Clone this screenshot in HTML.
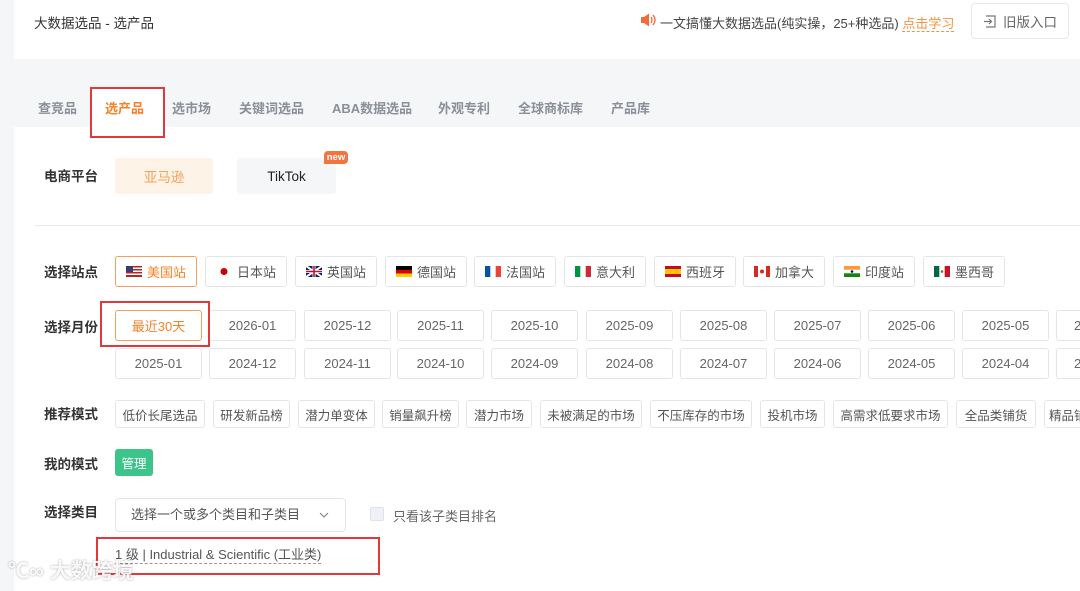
<!DOCTYPE html>
<html><head><meta charset="utf-8"><style>
*{margin:0;padding:0;box-sizing:border-box}
body{width:1080px;height:591px;overflow:hidden;background:#f5f6f8;font-family:"Liberation Sans","Noto Sans CJK SC",sans-serif;position:relative;color:#333}
.a{position:absolute}
.hdr{left:14px;top:0;width:1066px;height:59px;background:#fff}
.main{left:14px;top:127px;width:1066px;height:464px;background:#fff}
.tab{top:98px;font-size:13px;color:#8a8f99;font-weight:bold}
.lbl{font-size:13.5px;font-weight:bold;color:#333}
.b{position:absolute;border:1px solid #e3e5e9;border-radius:3px;background:#fff;font-size:13px;color:#555;display:flex;align-items:center;justify-content:center;white-space:nowrap;overflow:hidden}
.b svg{margin-right:5px}
.m{top:310px;width:87px;height:31px;font-size:13px;color:#666}
.m2{top:348px}
.r{top:400px;height:28px;font-size:12.5px;justify-content:center;padding:0 4px}
.red{position:absolute;border:2px solid #e0393b}
</style></head><body>
<div class="a hdr"></div>
<div class="a" style="left:34px;top:12px;font-size:13.5px;color:#333">大数据选品 - 选产品</div>
<svg class="a" style="left:640px;top:13px" width="18" height="14" viewBox="0 0 18 14"><path d="M1 4h3l5-3.5v13L4 10H1z" fill="#f26b3a"/><path d="M11 4q2 3 0 6M13 2q4 5 0 10" stroke="#f26b3a" stroke-width="1.3" fill="none"/></svg>
<div class="a" style="left:660px;top:13px;font-size:13px;color:#444">一文搞懂大数据选品(纯实操，25+种选品) <span style="color:#f29340;border-bottom:1px dashed #f29340">点击学习</span></div>
<div class="a" style="left:971px;top:3px;width:98px;height:36px;border:1px solid #e6e8eb;border-radius:4px;background:#fff;font-size:13.5px;color:#666;display:flex;align-items:center;justify-content:center"><svg width="14" height="13" viewBox="0 0 14 13" style="margin-right:6px"><path d="M3 1h9v11H3M1 6.5h7M6 4l2.5 2.5L6 9" stroke="#777" stroke-width="1.2" fill="none"/></svg>旧版入口</div>
<div class="a main"></div>
<div class="a" style="left:92px;top:88px;width:72px;height:39px;background:#fff"></div>
<div class="a tab" style="left:38px">查竞品</div>
<div class="a tab" style="left:105px;color:#f5822a">选产品</div>
<div class="a tab" style="left:172px">选市场</div>
<div class="a tab" style="left:239px">关键词选品</div>
<div class="a tab" style="left:332px">ABA数据选品</div>
<div class="a tab" style="left:438px">外观专利</div>
<div class="a tab" style="left:518px">全球商标库</div>
<div class="a tab" style="left:611px">产品库</div>
<div class="red" style="left:90px;top:87px;width:75px;height:51px"></div>

<div class="a lbl" style="left:44px;top:165px">电商平台</div>
<div class="a" style="left:115px;top:158px;width:98px;height:36px;background:#fef3e7;border-radius:3px;color:#f5a05a;font-size:13.5px;display:flex;align-items:center;justify-content:center">亚马逊</div>
<div class="a" style="left:237px;top:158px;width:99px;height:36px;background:#f5f6f8;border-radius:3px;color:#222;font-size:13.5px;display:flex;align-items:center;justify-content:center">TikTok</div>
<div class="a" style="left:324px;top:151px;width:24px;height:13px;background:#f2743e;border-radius:4px 4px 4px 0;color:#fff;font-size:9.5px;line-height:13px;text-align:center;font-weight:bold">new</div>
<div class="a" style="left:35px;top:225px;width:1045px;height:1px;background:#e8e9ec"></div>

<div class="a lbl" style="left:44px;top:261px">选择站点</div>
<div class="b" style="left:115px;top:256px;width:82px;height:31px;border-color:#f5a05a;color:#f5822a"><svg width="16" height="11"><rect width="16" height="11" fill="#b22"/><rect y="1.5" width="16" height="1.5" fill="#fff"/><rect y="4.5" width="16" height="1.5" fill="#fff"/><rect y="7.5" width="16" height="1.5" fill="#fff"/><rect width="7" height="6" fill="#3c3b6e"/></svg>美国站</div>
<div class="b" style="left:205px;top:256px;width:82px;height:31px"><svg width="16" height="11"><circle cx="8" cy="5.5" r="3.5" fill="#c00"/></svg>日本站</div>
<div class="b" style="left:295px;top:256px;width:82px;height:31px"><svg width="16" height="11"><rect width="16" height="11" fill="#012169"/><path d="M0 0L16 11M16 0L0 11" stroke="#fff" stroke-width="2"/><path d="M8 0v11M0 5.5h16" stroke="#fff" stroke-width="3"/><path d="M8 0v11M0 5.5h16" stroke="#c8102e" stroke-width="1.6"/></svg>英国站</div>
<div class="b" style="left:385px;top:256px;width:82px;height:31px"><svg width="16" height="11"><rect width="16" height="4" fill="#000"/><rect y="4" width="16" height="3.5" fill="#d00"/><rect y="7.5" width="16" height="3.5" fill="#fc0"/></svg>德国站</div>
<div class="b" style="left:474px;top:256px;width:82px;height:31px"><svg width="16" height="11"><rect width="5.3" height="11" fill="#0055a4"/><rect x="10.7" width="5.3" height="11" fill="#ef4135"/></svg>法国站</div>
<div class="b" style="left:564px;top:256px;width:82px;height:31px"><svg width="16" height="11"><rect width="5.3" height="11" fill="#009246"/><rect x="10.7" width="5.3" height="11" fill="#ce2b37"/></svg>意大利</div>
<div class="b" style="left:654px;top:256px;width:82px;height:31px"><svg width="16" height="11"><rect width="16" height="11" fill="#c60b1e"/><rect y="3" width="16" height="5" fill="#ffc400"/></svg>西班牙</div>
<div class="b" style="left:743px;top:256px;width:82px;height:31px"><svg width="16" height="11"><rect width="4" height="11" fill="#d52b1e"/><rect x="12" width="4" height="11" fill="#d52b1e"/><circle cx="8" cy="5.5" r="2" fill="#d52b1e"/></svg>加拿大</div>
<div class="b" style="left:833px;top:256px;width:82px;height:31px"><svg width="16" height="11"><rect width="16" height="3.7" fill="#f93"/><rect y="7.3" width="16" height="3.7" fill="#128807"/><circle cx="8" cy="5.5" r="1.3" fill="#008"/></svg>印度站</div>
<div class="b" style="left:923px;top:256px;width:82px;height:31px"><svg width="16" height="11"><rect width="5.3" height="11" fill="#006847"/><rect x="10.7" width="5.3" height="11" fill="#ce1126"/><circle cx="8" cy="5.5" r="1.3" fill="#8b5a2b"/></svg>墨西哥</div>

<div class="a lbl" style="left:44px;top:316px">选择月份</div>
<div class="b m" style="left:115px;border-color:#f5a05a;color:#f5822a">最近30天</div>
<div class="b m" style="left:209px">2026-01</div>
<div class="b m" style="left:304px">2025-12</div>
<div class="b m" style="left:397px">2025-11</div>
<div class="b m" style="left:491px">2025-10</div>
<div class="b m" style="left:586px">2025-09</div>
<div class="b m" style="left:680px">2025-08</div>
<div class="b m" style="left:774px">2025-07</div>
<div class="b m" style="left:868px">2025-06</div>
<div class="b m" style="left:962px">2025-05</div>
<div class="b m" style="left:1056px;justify-content:flex-start;padding-left:17px">2025-04</div>
<div class="b m m2" style="left:115px">2025-01</div>
<div class="b m m2" style="left:209px">2024-12</div>
<div class="b m m2" style="left:304px">2024-11</div>
<div class="b m m2" style="left:397px">2024-10</div>
<div class="b m m2" style="left:491px">2024-09</div>
<div class="b m m2" style="left:586px">2024-08</div>
<div class="b m m2" style="left:680px">2024-07</div>
<div class="b m m2" style="left:774px">2024-06</div>
<div class="b m m2" style="left:868px">2024-05</div>
<div class="b m m2" style="left:962px">2024-04</div>
<div class="b m m2" style="left:1056px;justify-content:flex-start;padding-left:17px">2024-03</div>
<div class="red" style="left:100px;top:301px;width:110px;height:46px"></div>

<div class="a lbl" style="left:44px;top:403px">推荐模式</div>
<div class="b r" style="left:115px;width:90px">低价长尾选品</div>
<div class="b r" style="left:213px;width:77px">研发新品榜</div>
<div class="b r" style="left:298px;width:77px">潜力单变体</div>
<div class="b r" style="left:382px;width:77px">销量飙升榜</div>
<div class="b r" style="left:466px;width:66px">潜力市场</div>
<div class="b r" style="left:540px;width:102px">未被满足的市场</div>
<div class="b r" style="left:650px;width:102px">不压库存的市场</div>
<div class="b r" style="left:760px;width:65px">投机市场</div>
<div class="b r" style="left:833px;width:115px">高需求低要求市场</div>
<div class="b r" style="left:956px;width:80px">全品类铺货</div>
<div class="b r" style="left:1044px;width:60px;justify-content:flex-start">精品铺货</div>

<div class="a lbl" style="left:44px;top:453px">我的模式</div>
<div class="a" style="left:115px;top:449px;width:38px;height:27px;background:#3cc48a;border-radius:3px;color:#fff;font-size:12.5px;display:flex;align-items:center;justify-content:center">管理</div>

<div class="a lbl" style="left:44px;top:501px">选择类目</div>
<div class="a" style="left:115px;top:498px;width:231px;height:34px;border:1px solid #e3e5e9;border-radius:4px;background:#fff;font-size:13px;color:#555;padding-left:15px;line-height:32px">选择一个或多个类目和子类目<svg style="position:absolute;left:203px;top:13px" width="10" height="7"><path d="M1 1l4 4 4-4" stroke="#888" fill="none" stroke-width="1.2"/></svg></div>
<div class="a" style="left:370px;top:507px;width:14px;height:14px;border:1px solid #dfe3ec;background:#eef1f8;border-radius:2px"></div>
<div class="a" style="left:393px;top:506px;font-size:13px;color:#666">只看该子类目排名</div>
<div class="a" style="left:115px;top:546px;font-size:13px;color:#555;border-bottom:1px dashed #999;line-height:17px">1 级 | Industrial &amp; Scientific (工业类)</div>
<div class="red" style="left:96px;top:537px;width:284px;height:38px"></div>
<div class="a" style="left:8px;top:555px;font-size:21px;font-weight:bold;color:rgba(255,255,255,.9);text-shadow:0 0 2px rgba(0,0,0,.35)">℃∞ 大数跨境</div>
</body></html>
